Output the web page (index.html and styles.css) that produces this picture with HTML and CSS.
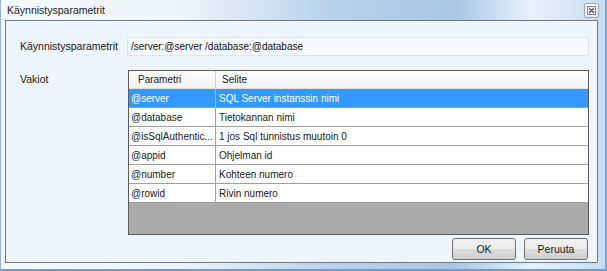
FILE: index.html
```html
<!DOCTYPE html>
<html lang="fi">
<head>
  <meta charset="UTF-8" />
  <title>Käynnistysparametrit</title>
  <link rel="stylesheet" href="styles.css">
</head>
<body>
  <div class="window">
    <div class="titlebar">
      <span class="title">Käynnistysparametrit</span>
      <button class="close" title="Sulje">
        <svg width="9" height="9" viewBox="0 0 9 9"><path d="M2 2 L7 7 M7 2 L2 7" stroke="#555" stroke-width="1.2" fill="none"/><rect x="0.5" y="0.5" width="8" height="8" fill="none" stroke="#888" stroke-width="1"/></svg>
      </button>
    </div>
    <div class="client">
      <div class="form">
        <label class="label">Käynnistysparametrit</label>
        <input class="textbox" type="text" value="/server:@server /database:@database">
        <label class="label">Vakiot</label>
        <div class="grid">
          <div class="grid-row head">
            <div class="cell c1">Parametri</div>
            <div class="cell c2">Selite</div>
          </div>
          <div class="grid-row selected">
            <div class="cell c1">@server</div>
            <div class="cell c2">SQL Server instanssin nimi</div>
          </div>
          <div class="grid-row">
            <div class="cell c1">@database</div>
            <div class="cell c2">Tietokannan nimi</div>
          </div>
          <div class="grid-row">
            <div class="cell c1">@isSqlAuthentic...</div>
            <div class="cell c2">1 jos Sql tunnistus muutoin 0</div>
          </div>
          <div class="grid-row">
            <div class="cell c1">@appid</div>
            <div class="cell c2">Ohjelman id</div>
          </div>
          <div class="grid-row">
            <div class="cell c1">@number</div>
            <div class="cell c2">Kohteen numero</div>
          </div>
          <div class="grid-row">
            <div class="cell c1">@rowid</div>
            <div class="cell c2">Rivin numero</div>
          </div>
          <div class="grid-empty"></div>
        </div>
      </div>
      <div class="buttons">
        <button class="btn">OK</button>
        <button class="btn">Peruuta</button>
      </div>
    </div>
  </div>
</body>
</html>
```

FILE: styles.css
```css
body {
  margin: 0;
  font-family: "Liberation Sans", Arial, sans-serif;
  font-size: 10px;
  color: #000;
  background: #cfe0f1;
}
.window {
  width: 607px;
  height: 271px;
  display: flex;
  flex-direction: column;
  box-sizing: border-box;
  border-left: 1px solid #8fb4d9;
  border-right: 2px solid #7ea6cf;
  border-bottom: 2px solid #6f9ccb;
  background: linear-gradient(90deg, #f4f8fc 0%, #eef4fa 30%, #b9d1ea 55%, #a9c6e6 75%, #e9f2fb 88%, #c7dcf0 100%);
  overflow: hidden;
}
.titlebar {
  height: 20px;
  display: flex;
  align-items: center;
  padding-left: 6px;
  padding-right: 6px;
}
.title {
  flex: 1;
  font-size: 10.5px;
  color: #1e1e1e;
}
.close {
  width: 15px;
  height: 15px;
  margin-top: 1px;
  padding: 0;
  border: 1px solid #9aa7b4;
  border-radius: 2px;
  background: linear-gradient(#fbfcfd, #e3e8ee);
  display: flex;
  align-items: center;
  justify-content: center;
}
.client {
  flex: 1;
  margin: 0 7px 6px 4px;
  border: 1px solid #6f7b88;
  background: #eef5fc;
  padding: 16px 8px 2px 14px;
  display: flex;
  flex-direction: column;
}
.form {
  display: grid;
  grid-template-columns: 107px 1fr;
  grid-template-rows: 19px 1fr;
  row-gap: 14px;
  flex: 1;
}
.label {
  font-size: 10.5px;
  color: #1a1a1a;
  padding-top: 3px;
}
.textbox {
  box-sizing: border-box;
  height: 19px;
  width: 100%;
  margin: 0;
  border: 1px solid #dde5ed;
  border-radius: 2px;
  background: #f6fafe;
  font: inherit;
  font-size: 10px;
  padding: 0 3px;
  color: #111;
}
.grid {
  margin-left: 1px;
  border: 1px solid #5a5a5a;
  background: #ababab;
  display: flex;
  flex-direction: column;
  height: 165px;
  box-sizing: border-box;
}
.grid-row {
  display: flex;
  height: 19px;
  box-sizing: border-box;
  border-bottom: 1px solid #a0a0a0;
  background: #fff;
  font-size: 10px;
  color: #1a1a1a;
}
.grid-row.head {
  height: 18px;
  border-bottom: 1px solid #e0e0e0;
  background: linear-gradient(#ffffff, #f1f2f4);
}
.grid-row.selected {
  background: #3399ff;
  color: #fff;
}
.cell {
  display: flex;
  align-items: center;
  white-space: nowrap;
  overflow: hidden;
}
.c1 {
  width: 87px;
  flex: none;
  padding-left: 2px;
  box-sizing: border-box;
  border-right: 1px solid #a0a0a0;
}
.c2 {
  flex: 1;
  padding-left: 3px;
}
.head .c1 {
  padding-left: 9px;
  border-right: 1px solid #d0d0d0;
}
.head .c2 {
  padding-left: 6px;
}
.selected .c1 {
  border-right-color: #7fbfff;
}
.grid-empty {
  flex: 1;
  background: #ababab;
}
.buttons {
  display: flex;
  justify-content: flex-end;
  gap: 8px;
  margin-top: 2px;
  padding-right: 1px;
}
.btn {
  width: 64px;
  height: 22px;
  border: 1px solid #707070;
  border-radius: 3px;
  background: linear-gradient(#f2f2f2 0%, #ebebeb 50%, #dddddd 51%, #cfcfcf 100%);
  font: inherit;
  font-size: 10.5px;
  color: #1a1a1a;
  padding: 0;
}
```
